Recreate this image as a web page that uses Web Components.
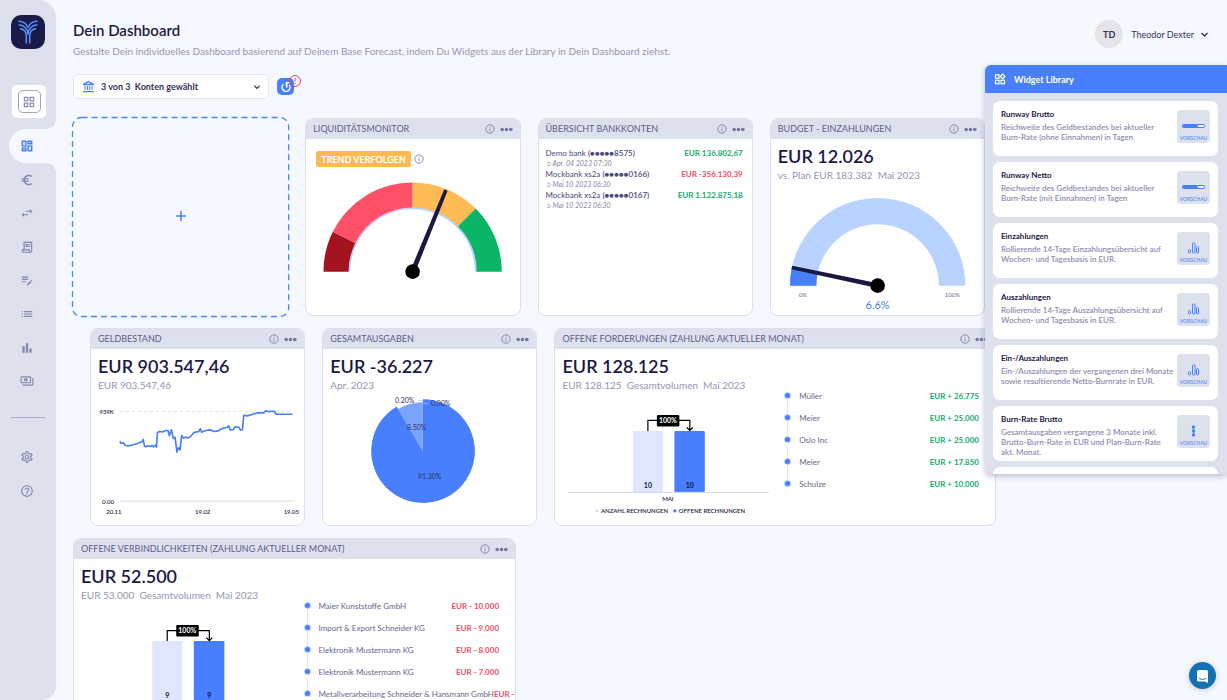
<!DOCTYPE html>
<html lang="de">
<head>
<meta charset="utf-8">
<meta name="viewport" content="width=device-width, initial-scale=1">
<title>Dein Dashboard</title>
<style>
  :root {
    --ink: #1b1846;
    --text: #5d5c8c;
    --muted: #9495b5;
    --blue: #477fff;
    --panel: #dde1ee;
    --green: #12ad6b;
    --red: #f04e63;
    --page: #f5f9ff;
  }
  html, body { margin: 0; height: 100%; }
  body { background: var(--page); color: var(--ink); font-family: Lato, "Open Sans", sans-serif; font-size: 9px; }
</style>
</head>
<body>
<dash-app></dash-app>

<script>
const ICONS = {
  apps: '<g fill="none" stroke="currentColor" stroke-width="2"><rect x="4" y="4" width="6" height="6"/><rect x="14" y="4" width="6" height="6"/><rect x="4" y="14" width="6" height="6"/><rect x="14" y="14" width="6" height="6"/></g>',
  dashboard: '<path stroke="currentColor" stroke-width=".6" d="M19 5v2h-4V5h4M9 5v6H5V5h4m10 8v6h-4v-6h4M9 17v2H5v-2h4M21 3h-8v6h8V3zM11 3H3v10h8V3zm10 8h-8v10h8V11zm-10 4H3v6h8v-6z"/>',
  euro: '<path d="M15 18.5c-2.51 0-4.68-1.42-5.76-3.5H15v-2H8.58c-.05-.33-.08-.66-.08-1s.03-.67.08-1H15V9H9.24C10.32 6.92 12.5 5.5 15 5.5c1.61 0 3.09.59 4.23 1.57L21 5.3C19.41 3.87 17.3 3 15 3c-3.92 0-7.24 2.51-8.48 6H3v2h3.06c-.04.33-.06.66-.06 1s.02.67.06 1H3v2h3.52c1.24 3.49 4.56 6 8.48 6 2.31 0 4.41-.87 6-2.3l-1.78-1.77c-1.13.98-2.6 1.57-4.22 1.57z"/>',
  swap: '<path d="M6.99 11L3 15l3.99 4v-3H14v-2H6.99v-3zM21 9l-3.99-4v3H10v2h7.01v3L21 9z"/>',
  receipt: '<path d="M19.5 3.5L18 2l-1.5 1.5L15 2l-1.5 1.5L12 2l-1.5 1.5L9 2 7.5 3.5 6 2v14H3v3c0 1.66 1.34 3 3 3h12c1.66 0 3-1.34 3-3V2l-1.5 1.5zM15 20H6c-.55 0-1-.45-1-1v-1h10v2zm4-1c0 .55-.45 1-1 1s-1-.45-1-1v-3H8V5h11v14zM9 7h6v2H9zM16 7h2v2h-2zM9 10h6v2H9zM16 10h2v2h-2z"/>',
  note: '<path d="M3 10h11v2H3v-2zm0-2h11V6H3v2zm0 8h7v-2H3v2zm15.01-3.13l.71-.71c.39-.39 1.02-.39 1.41 0l.71.71c.39.39.39 1.02 0 1.41l-.71.71-2.12-2.12zm-.71.71l-5.3 5.3V21h2.12l5.3-5.3-2.12-2.12z"/>',
  list: '<path d="M3 9h2V7H3v2zm0 4h2v-2H3v2zm0 4h2v-2H3v2zM7 7v2h14V7H7zm0 6h14v-2H7v2zm0 4h14v-2H7v2z"/>',
  bars: '<path d="M4 9h4v11H4zM16 13h4v7h-4zM10 4h4v16h-4z"/>',
  payments: '<path d="M19 14V6c0-1.1-.9-2-2-2H3c-1.1 0-2 .9-2 2v8c0 1.1.9 2 2 2h14c1.1 0 2-.9 2-2zm-2 0H3V6h14v8zm-7-7c-1.66 0-3 1.34-3 3s1.34 3 3 3 3-1.34 3-3-1.34-3-3-3zm13 0v11c0 1.1-.9 2-2 2H4v-2h17V7h2z"/>',
  gear: '<path d="M19.43 12.98c.04-.32.07-.64.07-.98 0-.34-.03-.66-.07-.98l2.11-1.65c.19-.15.24-.42.12-.64l-2-3.46c-.09-.16-.26-.25-.44-.25-.06 0-.12.01-.17.03l-2.49 1c-.52-.4-1.08-.73-1.69-.98l-.38-2.65C14.46 2.18 14.25 2 14 2h-4c-.25 0-.46.18-.49.42l-.38 2.65c-.61.25-1.17.59-1.69.98l-2.49-1c-.06-.02-.12-.03-.18-.03-.17 0-.34.09-.43.25l-2 3.46c-.13.22-.07.49.12.64l2.11 1.65c-.04.32-.07.65-.07.98 0 .33.03.66.07.98l-2.11 1.65c-.19.15-.24.42-.12.64l2 3.46c.09.16.26.25.44.25.06 0 .12-.01.17-.03l2.49-1c.52.4 1.08.73 1.69.98l.38 2.65c.03.24.24.42.49.42h4c.25 0 .46-.18.49-.42l.38-2.65c.61-.25 1.17-.59 1.69-.98l2.49 1c.06.02.12.03.18.03.17 0 .34-.09.43-.25l2-3.46c.12-.22.07-.49-.12-.64l-2.11-1.65zm-1.98-1.71c.04.31.05.52.05.73 0 .21-.02.43-.05.73l-.14 1.13.89.7 1.08.84-.7 1.21-1.27-.51-1.04-.42-.9.68c-.43.32-.84.56-1.25.73l-1.06.43-.16 1.13-.2 1.35h-1.4l-.19-1.35-.16-1.13-1.06-.43c-.43-.18-.83-.41-1.23-.71l-.91-.7-1.06.43-1.27.51-.7-1.21 1.08-.84.89-.7-.14-1.13c-.03-.31-.05-.54-.05-.74s.02-.43.05-.73l.14-1.13-.89-.7-1.08-.84.7-1.21 1.27.51 1.04.42.9-.68c.43-.32.84-.56 1.25-.73l1.06-.43.16-1.13.2-1.35h1.39l.19 1.35.16 1.13 1.06.43c.43.18.83.41 1.23.71l.91.7 1.06-.43 1.27-.51.7 1.21-1.07.85-.89.7.14 1.13zM12 8c-2.21 0-4 1.79-4 4s1.79 4 4 4 4-1.79 4-4-1.79-4-4-4zm0 6c-1.1 0-2-.9-2-2s.9-2 2-2 2 .9 2 2-.9 2-2 2z"/>',
  help: '<path d="M11 18h2v-2h-2v2zm1-16C6.48 2 2 6.48 2 12s4.48 10 10 10 10-4.48 10-10S17.52 2 12 2zm0 18c-4.41 0-8-3.59-8-8s3.59-8 8-8 8 3.59 8 8-3.59 8-8 8zm0-14c-2.21 0-4 1.79-4 4h2c0-1.1.9-2 2-2s2 .9 2 2c0 2-3 1.75-3 5h2c0-2.25 3-2.5 3-5 0-2.21-1.79-4-4-4z"/>',
  info: '<circle cx="12" cy="12" r="10" fill="none" stroke="currentColor" stroke-width="2"/><path d="M11 6.500h2v2.500h-2zM11 10.500h2v7h-2z"/>',
  more: '<circle cx="4" cy="12" r="3.300"/><circle cx="12" cy="12" r="3.300"/><circle cx="20" cy="12" r="3.300"/>',
  bank: '<path d="M12 1.500L22 7v2.500H2V7zM4.500 11h2v7.500h-2zM9 11h2v7.500H9zM13 11h2v7.500h-2zM17.500 11h2v7.500h-2zM2 20.500h20v2H2z"/><path d="M12 4l5 3H7z" fill="#fff"/>',
  chevron: '<path d="M4 8l8 8 8-8" fill="none" stroke="currentColor" stroke-width="3.500"/>',
  refresh: '<path d="M7 6.500A8 8 0 1 0 18.500 8" fill="none" stroke="currentColor" stroke-width="3"/><path d="M11 2h8v3h-4v8h-3z"/>',
  widgets: '<g fill="none" stroke="currentColor" stroke-width="2.400"><rect x="3" y="3.500" width="7" height="7"/><rect x="3" y="14.500" width="7" height="7"/><rect x="14" y="14.500" width="7" height="7"/><rect x="14" y="3.500" width="6.500" height="6.500" transform="rotate(45 17.250 6.750)"/></g>',
  plus: '<path d="M10.500 2h3v8.500H22v3h-8.500V22h-3v-8.500H2v-3h8.500z"/>',
  sync: '<path d="M7 6a7 7 0 1 1 1 12M7 18v-6M7 18h6M12 3L7 6l4 4" fill="none" stroke="currentColor" stroke-width="2"/>'
};

/* Base class: clones a template made of the element's styles and markup. */
class BaseElement extends HTMLElement {
  connectedCallback() {
    if (this.shadowRoot) return;
    const template = document.createElement('template');
    template.innerHTML = `<style>*{box-sizing:border-box}${this.styles()}</style>${this.markup()}`;
    this.attachShadow({ mode: 'open' }).append(template.content.cloneNode(true));
  }
  styles() { return ':host{display:block}'; }
  markup() { return '<slot></slot>'; }
  attr(name) { return this.getAttribute(name) || ''; }
}

class DashIcon extends BaseElement {
  styles() {
    return `:host{display:inline-flex;flex:none;width:var(--icon,14px);height:var(--icon,14px)}
      svg{width:100%;height:100%;fill:currentColor;display:block}`;
  }
  markup() { return `<svg viewBox="0 0 24 24" aria-hidden="true">${ICONS[this.attr('name')]}</svg>`; }
}
customElements.define('dash-icon', DashIcon);

class SideNav extends BaseElement {
  styles() {
    return `:host{display:flex;flex-direction:column;align-items:flex-end;flex:none;width:56px;height:100%;background:var(--panel);border-radius:0 18px 14px 0;color:#8587ad}
      a{color:inherit;text-decoration:none;display:flex;align-items:center;justify-content:center}
      .logo{width:34px;height:34px;margin:15px 11px 0 0}
      .logo svg{width:34px;height:34px}
      .apps{width:34px;height:33px;margin:36px 10px 0 0;border:0;padding:0;border-radius:5px;background:#fff;color:#8587ad;display:flex;align-items:center;justify-content:center}
      .apps span{width:23px;height:23px;border:1px solid #a2a4c2;border-radius:5px;display:flex;align-items:center;justify-content:center}
      .active{position:relative;width:47px;height:34px;margin-top:11px;padding-right:12px;border-radius:17px 0 0 17px;background:var(--page);color:var(--blue)}
      .active::before,.active::after{content:"";position:absolute;right:0;width:10px;height:10px}
      .active::before{bottom:100%;background:radial-gradient(circle at 0 0,transparent 10px,var(--page) 10px)}
      .active::after{top:100%;background:radial-gradient(circle at 0 100%,transparent 10px,var(--page) 10px)}
      nav,.foot{display:grid;grid-auto-rows:1fr;width:47px;padding-right:12px}
      nav{height:235px}
      hr{width:34px;margin:19px 11px 22px 0;border:0;border-top:1px solid #a9abc8}
      .foot{height:68px}`;
  }
  markup() {
    const link = (icon, label) => `<a href="#${icon}" aria-label="${label}"><dash-icon name="${icon}"></dash-icon></a>`;
    return `<a class="logo" href="#home" aria-label="Startseite"><svg viewBox="0 0 34 34"><rect width="34" height="34" rx="10" fill="#1b1b49"/>
        <g fill="none" stroke="#5a8ff5" stroke-width="1.500"><path d="M15.300 28.500V20.500C15.300 16.500 12.700 14.200 9 13.700M7.600 9.800C12.500 10 17 13.500 17 19.500M7.400 6.300C12.500 6.300 15.500 8.500 17 12.500M18.700 28.500V20.500C18.700 16.500 21.300 14.200 25 13.700M26.400 9.800C21.500 10 17 13.500 17 19.500M26.600 6.300C21.500 6.300 18.500 8.500 17 12.500"/></g></svg></a>
      <button class="apps" aria-label="Apps"><span><dash-icon name="apps"></dash-icon></span></button>
      <a class="active" href="#dashboard" aria-label="Dashboard" aria-current="page"><dash-icon name="dashboard"></dash-icon></a>
      <nav>${link('euro', 'Liquidität')}${link('swap', 'Umsätze')}${link('receipt', 'Rechnungen')}${link('note', 'Planung')}${link('list', 'Liste')}${link('bars', 'Berichte')}${link('payments', 'Zahlungen')}</nav>
      <hr>
      <div class="foot">${link('gear', 'Einstellungen')}${link('help', 'Hilfe')}</div>`;
  }
}
customElements.define('side-nav', SideNav);

class PageHeader extends BaseElement {
  styles() {
    return `:host{display:flex;justify-content:space-between;align-items:flex-start;padding-right:18px}
      h1{margin:0;font-size:15px;line-height:20px;font-weight:600}
      p{margin:3px 0 0;font-size:10px;line-height:16px;color:var(--muted)}
      button{display:flex;align-items:center;gap:8px;border:0;padding:0;background:none;font:inherit;font-size:9px;color:#33325a;--icon:9px}
      .avatar{width:28px;height:28px;border-radius:50%;background:#e4e4e9;display:flex;align-items:center;justify-content:center;font-weight:700}
      .name{display:flex;align-items:center;gap:6px}`;
  }
  markup() {
    return `<div><h1>Dein Dashboard</h1><p><slot></slot></p></div>
      <button aria-haspopup="menu"><span class="avatar">TD</span><span class="name">Theodor Dexter <dash-icon name="chevron"></dash-icon></span></button>`;
  }
}
customElements.define('page-header', PageHeader);

class AccountPicker extends BaseElement {
  styles() {
    return `:host{display:flex;align-items:center;gap:8px;height:25px}
      label{display:grid;align-items:center;width:196px;height:25px;color:#33325a}
      label>*{grid-area:1/1}
      select{appearance:none;width:100%;height:100%;margin:0;padding:0 24px 0 27px;border:1px solid #e3e6f0;border-radius:5px;background:#fff;font:700 9px Lato,sans-serif;color:inherit}
      .bank{--icon:13px;color:var(--blue);margin-left:9px;z-index:1}
      .chev{--icon:8px;justify-self:end;margin-right:8px;z-index:1}
      button{position:relative;width:17px;height:17px;padding:0;border:0;border-radius:5px;background:var(--blue);color:#fff;display:flex;align-items:center;justify-content:center;--icon:12px}
      .badge{position:absolute;left:12px;top:-3px;width:12px;height:12px;border:1px solid #ea4747;border-radius:50%;color:#ea4747;font:700 8px/10px Lato,sans-serif;text-align:center}`;
  }
  markup() {
    return `<label><dash-icon class="bank" name="bank"></dash-icon>
        <select aria-label="Konten"><option>3 von 3&nbsp; Konten gewählt</option></select>
        <dash-icon class="chev" name="chevron"></dash-icon></label>
      <button aria-label="Aktualisieren"><dash-icon name="refresh"></dash-icon><span class="badge">!</span></button>`;
  }
}
customElements.define('account-picker', AccountPicker);

class DropZone extends BaseElement {
  styles() {
    return `:host{display:block;position:relative;--icon:12px}
      button{width:100%;height:100%;border:0;padding:0;background:none;color:var(--blue)}
      svg{position:absolute;inset:-1px;width:calc(100% + 2px);height:calc(100% + 2px);overflow:visible;pointer-events:none}`;
  }
  markup() {
    return `<button aria-label="Widget hinzufügen"><dash-icon name="plus"></dash-icon></button>
      <svg aria-hidden="true"><rect x=".5" y=".5" width="99.500%" height="99.500%" rx="9" fill="none" stroke="#4a86f8" stroke-width="1.300" stroke-dasharray="6 4"/></svg>`;
  }
}
customElements.define('drop-zone', DropZone);

class WidgetCard extends BaseElement {
  styles() {
    return `:host{display:flex;flex-direction:column;min-width:0;min-height:198px;overflow:hidden;border:1px solid #dcdfea;border-radius:8px;background:#fff}
      header{display:flex;align-items:center;height:20px;padding:0 7px;background:var(--panel);color:var(--text)}
      h2{margin:0;flex:1;font-size:9px;line-height:12px;font-weight:400;white-space:nowrap}
      button{display:flex;border:0;padding:0;background:none;color:#74759f}
      .info{--icon:10px;margin-right:5px}
      .more{--icon:13px}
      .body{flex:1;display:flex;flex-direction:column}`;
  }
  markup() {
    return `<header><h2>${this.attr('heading')}</h2>
        <button class="info" aria-label="Information"><dash-icon name="info"></dash-icon></button>
        <button class="more" aria-label="Menü"><dash-icon name="more"></dash-icon></button></header>
      <div class="body"><slot></slot></div>`;
  }
}
customElements.define('widget-card', WidgetCard);

class KpiFigure extends BaseElement {
  styles() {
    return `:host{display:block;padding:6px 7px 1px;white-space:nowrap}
      strong{display:block;font-size:18px;line-height:22px;font-weight:600;color:var(--ink)}
      span{display:block;font-size:10px;line-height:16px;color:var(--muted)}`;
  }
  markup() { return `<strong>${this.attr('value')}</strong><span><slot></slot></span>`; }
}
customElements.define('kpi-figure', KpiFigure);

/* Ring segment between two angles, in degrees, counter-clockwise from the right. */
function ring(cx, cy, outer, inner, from, to, fill) {
  const at = (radius, deg) => {
    const a = deg * Math.PI / 180;
    return `${(cx + radius * Math.cos(a)).toFixed(2)} ${(cy - radius * Math.sin(a)).toFixed(2)}`;
  };
  return `<path fill="${fill}" d="M${at(outer, from)}A${outer} ${outer} 0 0 1 ${at(outer, to)}L${at(inner, to)}A${inner} ${inner} 0 0 0 ${at(inner, from)}Z"/>`;
}
function needle(cx, cy, length, deg) {
  return `<g transform="rotate(${-deg} ${cx} ${cy})"><path fill="#1c1844" d="M${cx} ${cy - 2.5}L${cx + length} ${cy - 1.8}V${cy + 1.8}L${cx} ${cy + 2.5}Z"/></g><circle cx="${cx}" cy="${cy}" r="7.300" fill="#000"/>`;
}
const CHART = ':host{display:block}svg{display:block;width:100%;overflow:visible}text{font-family:Lato,sans-serif}';

class LiquidityGauge extends BaseElement {
  styles() {
    return CHART + `.tools{display:flex;align-items:center;gap:3px;padding:12px 10px 0;color:#74759f;--icon:10px}
      button{border:0;font:inherit;background:none;padding:0;color:inherit;display:flex}
      .trend{height:16px;align-items:center;padding:0 5px;border-radius:2px;background:#ffb951;color:#fff;font-size:9px;font-weight:700}`;
  }
  markup() {
    return `<div class="tools"><button class="trend">TREND VERFOLGEN</button><button aria-label="Information"><dash-icon name="info"></dash-icon></button></div>
      <svg viewBox="0 0 214 146" role="img" aria-label="Liquiditätsmonitor">
      ${ring(107, 105, 65, 62.5, 180, 0, '#bcd3ff')}
      ${ring(107, 105, 89.5, 64.3, 180, 153.4, '#a41420')}${ring(107, 105, 89.5, 64.3, 153.4, 90, '#ff5067')}
      ${ring(107, 105, 89.5, 64.3, 90, 45, '#ffbc55')}${ring(107, 105, 89.5, 64.3, 45, 0, '#0cb468')}
      ${needle(107, 105, 88.5, 67.8)}</svg>`;
  }
}
customElements.define('liquidity-gauge', LiquidityGauge);

class BudgetGauge extends BaseElement {
  styles() { return CHART; }
  markup() {
    return `<svg viewBox="0 0 214 131" role="img" aria-label="Budget">
      ${ring(107, 102, 88, 61.5, 180, 0, '#bad2ff')}${ring(107, 102, 88, 61.5, 180, 168, '#477fff')}
      ${needle(107, 102, 88, 168)}
      <g font-size="6" fill="#6a6a86" text-anchor="middle"><text x="32" y="113">0%</text><text x="182" y="113">100%</text></g>
      <text x="107" y="125" font-size="11" fill="#477fff" text-anchor="middle">6.6%</text></svg>`;
  }
}
customElements.define('budget-gauge', BudgetGauge);

class CashChart extends BaseElement {
  styles() { return CHART; }
  markup() {
    return `<svg viewBox="0 0 214 131" role="img" aria-label="Geldbestand Verlauf">
      <path d="M29 17.500H204" stroke="#e2e3ea" stroke-dasharray="3 3"/><path d="M29 107.500H204" stroke="#dcdde6"/>
      <polyline transform="translate(-11 -74) scale(.3333)" fill="none" stroke="#477fff" stroke-width="5" stroke-linejoin="round" points="120,364 124,371 131,369 136,377 146,378 160,375 172,371 186,366 190,359 194,378 198,381 204,378 212,380 217,377 221,381 226,376 230,382 233,338 240,335 250,336 258,332 265,332 269,348 275,330 281,356 286,352 292,397 296,384 301,390 306,347 311,355 318,352 326,354 335,348 343,338 352,336 358,335 362,326 366,337 378,332 392,330 404,335 414,334 428,326 444,322 448,318 452,330 462,329 466,321 478,322 483,331 489,329 493,286 504,288 520,283 535,279 553,279 558,273 568,275 585,274 590,283 640,283"/>
      <g font-size="6" font-weight="600" fill="#24223f"><text x="23" y="20" text-anchor="end">939K</text><text x="23" y="110" text-anchor="end">0.00</text>
      <g text-anchor="middle"><text x="23" y="120">20.11</text><text x="112" y="120">19.02</text><text x="201" y="120">19.05</text></g></g></svg>`;
  }
}
customElements.define('cash-chart', CashChart);

class ExpensePie extends BaseElement {
  styles() { return CHART; }
  markup() {
    return `<svg viewBox="0 0 214 131" role="img" aria-label="Gesamtausgaben">
      <path fill="#477fff" d="M100.300 57.300V5.300A52 52 0 1 1 74 12.500Z"/>
      <path fill="#7ba3ff" d="M100.300 57.300L75.300 15.100A49 49 0 0 1 100.300 8.300Z"/>
      <path d="M95 6.500H100M100.500 9.500H106" stroke="#a9c3ff" stroke-width=".7"/>
      <g font-size="7" fill="#33325a" text-anchor="middle"><text x="82" y="9">0.20%</text><text x="118" y="12">0.00%</text><text x="94" y="36">8.50%</text><text x="107" y="85">91.30%</text></g></svg>`;
  }
}
customElements.define('expense-pie', ExpensePie);

class BankAccount extends BaseElement {
  styles() {
    return `:host{display:flex;justify-content:space-between;font-size:8px;line-height:11px;height:21px;color:#4c4a7c;white-space:nowrap}
      b{font-weight:600}
      small{display:flex;align-items:center;gap:1px;font-size:7px;line-height:9px;font-style:italic;color:#86869f;--icon:6px}
      .amount{font-weight:700;color:var(--green)}
      :host([negative]) .amount{color:var(--red)}`;
  }
  markup() {
    return `<div>${this.attr('bank')} <b>(●●●●●${this.attr('digits')})</b><small><dash-icon name="sync"></dash-icon>${this.attr('synced')}</small></div>
      <span class="amount"><slot></slot></span>`;
  }
}
customElements.define('bank-account', BankAccount);

class BankList extends BaseElement {
  styles() { return ':host{display:block;padding:9px 9px 0 7px}'; }
}
customElements.define('bank-list', BankList);

class InvoiceChart extends BaseElement {
  styles() { return CHART; }
  markup() {
    const n = this.attr('count');
    return `<svg viewBox="0 0 222 131" role="img" aria-label="Rechnungen">
      <rect x="78" y="37" width="30" height="61" rx="1" fill="#dfe6ff"/><rect x="119.500" y="37" width="30.500" height="61" rx="1" fill="#477fff"/>
      <path d="M13 98.500H214" stroke="#d3d5e2"/>
      <path d="M93 37V26.500H135V36M132 33.500L135 36.500L138 33.500" fill="none" stroke="#000" stroke-width="1.200"/>
      <rect x="102" y="21" width="22.500" height="11.500" rx="1" fill="#000"/>
      <text x="113" y="29" font-size="7" font-weight="700" fill="#fff" text-anchor="middle">100%</text>
      <g font-size="7" font-weight="700" fill="#14133a" text-anchor="middle"><text x="93" y="94">${n}</text><text x="135" y="94">${n}</text></g>
      <g font-size="6" font-weight="600" fill="#24223f"><text x="113" y="107" text-anchor="middle">MAI</text><text x="46" y="119">ANZAHL RECHNUNGEN</text><text x="124" y="119">OFFENE RECHNUNGEN</text></g>
      <circle cx="42" cy="117" r="1.600" fill="#d3deff"/><circle cx="120" cy="117" r="1.700" fill="#477fff"/></svg>`;
  }
}
customElements.define('invoice-chart', InvoiceChart);

class InvoiceItem extends BaseElement {
  styles() {
    return `:host{position:relative;display:flex;justify-content:space-between;padding-left:22px;font-size:8px;line-height:22px;height:22px;color:#66658f;white-space:nowrap}
      :host::before{content:"";position:absolute;left:8px;top:8px;width:5px;height:5px;border-radius:50%;background:var(--blue);box-shadow:0 0 0 1px #c3d5ff;z-index:1}
      :host::after{content:"";position:absolute;left:10px;top:11px;height:22px;border-left:1px solid #dce6ff}
      :host(:last-child)::after{display:none}
      .amount{font-weight:700;color:var(--green)}
      :host([negative]) .amount{color:var(--red)}`;
  }
  markup() { return `<span>${this.attr('name')}</span><span class="amount"><slot></slot></span>`; }
}
customElements.define('invoice-item', InvoiceItem);

class InvoiceWidget extends BaseElement {
  styles() {
    return `:host{display:grid;grid-template-columns:222fr 218fr}
      .items{padding:36px 16px 0 0;min-width:0}`;
  }
  markup() {
    return `<div><kpi-figure value="${this.attr('value')}">${this.attr('note')}</kpi-figure><invoice-chart count="${this.attr('count')}"></invoice-chart></div>
      <div class="items"><slot></slot></div>`;
  }
}
customElements.define('invoice-widget', InvoiceWidget);

const PREVIEWS = {
  runway: '<rect x="5" y="14" width="23" height="4" rx="2" fill="#477fff"/><rect x="20.500" y="15" width="6.500" height="2" rx="1" fill="#fff"/>',
  bars: '<g fill="none" stroke="#477fff"><rect x="11.500" y="17.500" width="2" height="3.500" rx="1"/><rect x="15.500" y="11" width="2.500" height="10" rx="1"/><rect x="19.500" y="14.500" width="2" height="6.500" rx="1"/></g>',
  burn: '<path d="M16.500 11V21" stroke="#477fff"/><g fill="#477fff"><circle cx="16.500" cy="12" r="1.700"/><circle cx="16.500" cy="16" r="1.700"/><circle cx="16.500" cy="20" r="1.700"/></g>'
};
class LibraryItem extends BaseElement {
  styles() {
    return `:host{display:flex;flex:none;justify-content:space-between;height:55px;padding:7px 8px;border-radius:7px;background:#fff}
      h3{margin:0;font-size:8px;line-height:12px;font-weight:700;color:#232044}
      p{margin:2px 0 0;font-size:8px;line-height:10px;font-weight:600;color:#8d8db1;white-space:pre}
      figure{flex:none;margin:2px 0 0;width:33px;height:33px;border-radius:4px;background:var(--panel)}
      svg{display:block}`;
  }
  markup() {
    if (!this.hasAttribute('preview')) return '';
    return `<div><h3>${this.attr('name')}</h3><p><slot></slot></p></div>
      <figure><svg width="33" height="33" viewBox="0 0 33 33">${PREVIEWS[this.attr('preview')]}
      <text x="16.500" y="30" font-family="Lato,sans-serif" font-size="5" font-weight="700" fill="#6c97f5" text-anchor="middle">VORSCHAU</text></svg></figure>`;
  }
}
customElements.define('library-item', LibraryItem);

class WidgetLibrary extends BaseElement {
  styles() {
    return `:host{display:flex;flex-direction:column;width:242px;max-height:409px;overflow:hidden;border-radius:6px 0 0 6px;background:var(--panel);box-shadow:0 2px 6px rgba(40,45,90,.3)}
      header{display:flex;align-items:center;gap:8px;flex:none;height:28px;padding-left:9px;background:var(--blue);color:#fff;--icon:12px}
      h2{margin:0;font-size:9px;font-weight:700}
      .list{display:flex;flex-direction:column;gap:6px;padding:8px 9px 8px 8px;overflow-y:auto;scrollbar-width:none}`;
  }
  markup() { return `<header><dash-icon name="widgets"></dash-icon><h2>Widget Library</h2></header><div class="list"><slot></slot></div>`; }
}
customElements.define('widget-library', WidgetLibrary);

class ChatLauncher extends BaseElement {
  styles() {
    return `:host{display:block}
      button{display:flex;align-items:center;justify-content:center;width:27px;height:27px;border:0;padding:0;border-radius:50%;background:#1272b4;box-shadow:0 1px 6px rgba(0,0,0,.2)}`;
  }
  markup() {
    return `<button aria-label="Chat öffnen"><svg width="13" height="14" viewBox="0 0 13 14"><path fill="#fff" d="M2.500 1h8Q12 1 12 2.500V14L9 12.500H2.500Q1 12.500 1 11V2.500Q1 1 2.500 1Z"/><path d="M3 9.500Q6.500 11.500 10 9.500" fill="none" stroke="#1272b4"/></svg></button>`;
  }
}
customElements.define('chat-launcher', ChatLauncher);

class DashApp extends BaseElement {
  styles() {
    return `:host{display:flex;position:relative;height:100vh;overflow:hidden}
      main{flex:1;min-width:0;padding:20px 0 20px 17px;overflow-y:auto;scrollbar-width:none}
      account-picker{margin-top:15px}
      .board{display:grid;gap:12px;margin:19px 231px 0 0}
      .row{display:grid;gap:17px}
      .four{grid-template-columns:repeat(4,minmax(0,1fr));padding-right:11px}
      .mixed{grid-template-columns:215fr 215fr 441fr;padding-left:17px}
      .half{grid-template-columns:48%}
      widget-library{position:absolute;right:0;top:65px}
      chat-launcher{position:absolute;right:11px;bottom:11px}`;
  }
  markup() {
    return `<side-nav></side-nav>
    <main>
      <page-header>Gestalte Dein individuelles Dashboard basierend auf Deinem Base Forecast, indem Du Widgets aus der Library in Dein Dashboard ziehst.</page-header>
      <account-picker></account-picker>
      <div class="board">
        <section class="row four">
          <drop-zone></drop-zone>
          <widget-card heading="LIQUIDITÄTSMONITOR"><liquidity-gauge></liquidity-gauge></widget-card>
          <widget-card heading="ÜBERSICHT BANKKONTEN"><bank-list>
            <bank-account bank="Demo bank" digits="8575" synced="Apr. 04 2023 07:30">EUR 136.802,67</bank-account>
            <bank-account bank="Mockbank xs2a" digits="0166" synced="Mai 10 2023 06:30" negative>EUR -356.130,39</bank-account>
            <bank-account bank="Mockbank xs2a" digits="0167" synced="Mai 10 2023 06:30">EUR 1.122.875,18</bank-account>
          </bank-list></widget-card>
          <widget-card heading="BUDGET - EINZAHLUNGEN"><kpi-figure value="EUR 12.026">vs. Plan EUR 183.382&nbsp; Mai 2023</kpi-figure><budget-gauge></budget-gauge></widget-card>
        </section>
        <section class="row mixed">
          <widget-card heading="GELDBESTAND"><kpi-figure value="EUR 903.547,46">EUR 903.547,46</kpi-figure><cash-chart></cash-chart></widget-card>
          <widget-card heading="GESAMTAUSGABEN"><kpi-figure value="EUR -36.227">Apr. 2023</kpi-figure><expense-pie></expense-pie></widget-card>
          <widget-card heading="OFFENE FORDERUNGEN (ZAHLUNG AKTUELLER MONAT)">
            <invoice-widget value="EUR 128.125" note="EUR 128.125&nbsp; Gesamtvolumen&nbsp; Mai 2023" count="10">
              <invoice-item name="Müller">EUR + 26.775</invoice-item>
              <invoice-item name="Meier">EUR + 25.000</invoice-item>
              <invoice-item name="Oslo Inc">EUR + 25.000</invoice-item>
              <invoice-item name="Meier">EUR + 17.850</invoice-item>
              <invoice-item name="Schulze">EUR + 10.000</invoice-item>
            </invoice-widget></widget-card>
        </section>
        <section class="row half">
          <widget-card heading="OFFENE VERBINDLICHKEITEN (ZAHLUNG AKTUELLER MONAT)">
            <invoice-widget value="EUR 52.500" note="EUR 53.000&nbsp; Gesamtvolumen&nbsp; Mai 2023" count="9">
              <invoice-item negative name="Maier Kunststoffe GmbH">EUR - 10.000</invoice-item>
              <invoice-item negative name="Import &amp; Export Schneider KG">EUR - 9.000</invoice-item>
              <invoice-item negative name="Elektronik Mustermann KG">EUR - 8.000</invoice-item>
              <invoice-item negative name="Elektronik Mustermann KG">EUR - 7.000</invoice-item>
              <invoice-item negative name="Metallverarbeitung Schneider &amp; Hansmann GmbH">EUR - 6.000</invoice-item>
            </invoice-widget></widget-card>
        </section>
      </div>
    </main>
    <widget-library>
      <library-item name="Runway Brutto" preview="runway">Reichweite des Geldbestandes bei aktueller
Burn-Rate (ohne Einnahmen) in Tagen</library-item>
      <library-item name="Runway Netto" preview="runway">Reichweite des Geldbestandes bei aktueller
Burn-Rate (mit Einnahmen) in Tagen</library-item>
      <library-item name="Einzahlungen" preview="bars">Rollierende 14-Tage Einzahlungsübersicht auf
Wochen- und Tagesbasis in EUR.</library-item>
      <library-item name="Auszahlungen" preview="bars">Rollierende 14-Tage Auszahlungsübersicht auf
Wochen- und Tagesbasis in EUR.</library-item>
      <library-item name="Ein-/Auszahlungen" preview="bars">Ein-/Auszahlungen der vergangenen drei Monate
sowie resultierende Netto-Burnrate in EUR.</library-item>
      <library-item name="Burn-Rate Brutto" preview="burn">Gesamtausgaben vergangene 3 Monate inkl.
Brutto-Burn-Rate in EUR und Plan-Burn-Rate
akt. Monat.</library-item>
      <library-item></library-item>
    </widget-library>
    <chat-launcher></chat-launcher>`;
  }
}
customElements.define('dash-app', DashApp);
</script>
</body>
</html>
